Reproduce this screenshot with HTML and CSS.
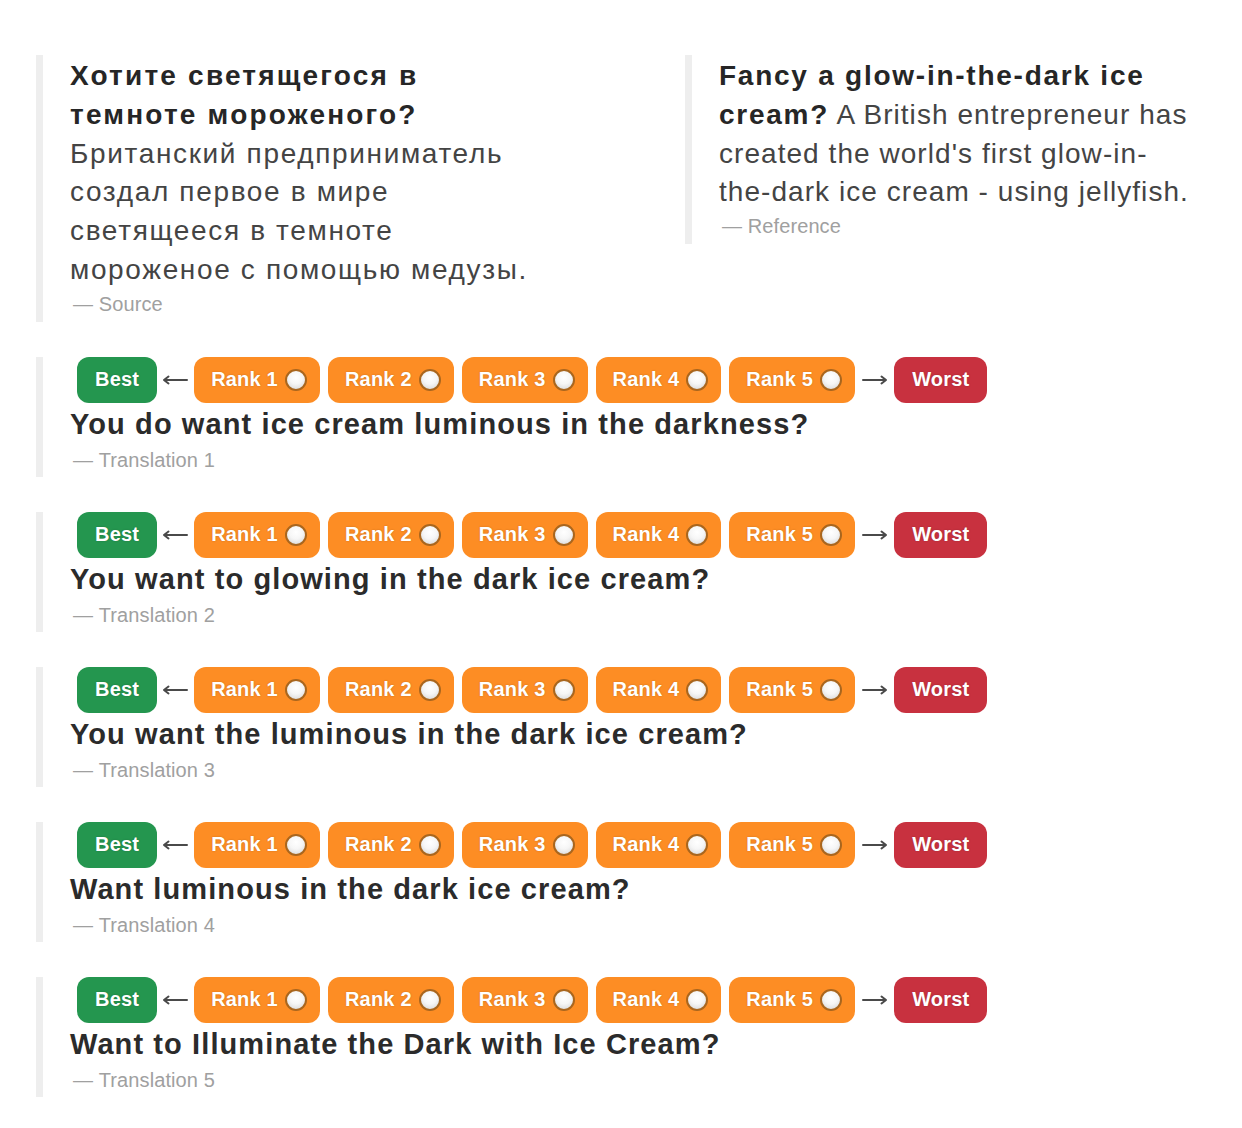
FILE: index.html
```html
<!DOCTYPE html>
<html lang="en">
<head>
<meta charset="utf-8">
<title>Translation ranking</title>
<link rel="stylesheet" href="styles.css">
</head>
<body>
<div class="page">
  <div class="pair">
    <blockquote class="quote quote-left" lang="ru">
      <p><strong>Хотите светящегося в темноте мороженого?</strong> Британский предприниматель создал первое в мире светящееся в темноте мороженое с помощью медузы.</p>
      <footer>Source</footer>
    </blockquote>
    <blockquote class="quote quote-right">
      <p><strong>Fancy a glow-in-the-dark ice cream?</strong> A British entrepreneur has created the world's first glow-in-the-dark ice cream - using jellyfish.</p>
      <footer>Reference</footer>
    </blockquote>
  </div>

  <blockquote class="quote rank-block">
    <div class="ranks">
      <span class="badge best">Best</span>
      <svg class="arrow" viewBox="0 0 26 10" width="26" height="10"><path d="M2 5H25M6.5 1.5L2 5L6.5 8.5"/></svg>
      <span class="badge rank">Rank 1<i class="dot"></i></span>
      <span class="badge rank">Rank 2<i class="dot"></i></span>
      <span class="badge rank">Rank 3<i class="dot"></i></span>
      <span class="badge rank">Rank 4<i class="dot"></i></span>
      <span class="badge rank">Rank 5<i class="dot"></i></span>
      <svg class="arrow arrow-right" viewBox="0 0 26 10" width="26" height="10"><path d="M1 5H24M19.5 1.5L24 5L19.5 8.5"/></svg>
      <span class="badge worst">Worst</span>
    </div>
    <p class="sentence">You do want ice cream luminous in the darkness?</p>
    <footer>Translation 1</footer>
  </blockquote>

  <blockquote class="quote rank-block">
    <div class="ranks">
      <span class="badge best">Best</span>
      <svg class="arrow" viewBox="0 0 26 10" width="26" height="10"><path d="M2 5H25M6.5 1.5L2 5L6.5 8.5"/></svg>
      <span class="badge rank">Rank 1<i class="dot"></i></span>
      <span class="badge rank">Rank 2<i class="dot"></i></span>
      <span class="badge rank">Rank 3<i class="dot"></i></span>
      <span class="badge rank">Rank 4<i class="dot"></i></span>
      <span class="badge rank">Rank 5<i class="dot"></i></span>
      <svg class="arrow arrow-right" viewBox="0 0 26 10" width="26" height="10"><path d="M1 5H24M19.5 1.5L24 5L19.5 8.5"/></svg>
      <span class="badge worst">Worst</span>
    </div>
    <p class="sentence">You want to glowing in the dark ice cream?</p>
    <footer>Translation 2</footer>
  </blockquote>

  <blockquote class="quote rank-block">
    <div class="ranks">
      <span class="badge best">Best</span>
      <svg class="arrow" viewBox="0 0 26 10" width="26" height="10"><path d="M2 5H25M6.5 1.5L2 5L6.5 8.5"/></svg>
      <span class="badge rank">Rank 1<i class="dot"></i></span>
      <span class="badge rank">Rank 2<i class="dot"></i></span>
      <span class="badge rank">Rank 3<i class="dot"></i></span>
      <span class="badge rank">Rank 4<i class="dot"></i></span>
      <span class="badge rank">Rank 5<i class="dot"></i></span>
      <svg class="arrow arrow-right" viewBox="0 0 26 10" width="26" height="10"><path d="M1 5H24M19.5 1.5L24 5L19.5 8.5"/></svg>
      <span class="badge worst">Worst</span>
    </div>
    <p class="sentence">You want the luminous in the dark ice cream?</p>
    <footer>Translation 3</footer>
  </blockquote>

  <blockquote class="quote rank-block">
    <div class="ranks">
      <span class="badge best">Best</span>
      <svg class="arrow" viewBox="0 0 26 10" width="26" height="10"><path d="M2 5H25M6.5 1.5L2 5L6.5 8.5"/></svg>
      <span class="badge rank">Rank 1<i class="dot"></i></span>
      <span class="badge rank">Rank 2<i class="dot"></i></span>
      <span class="badge rank">Rank 3<i class="dot"></i></span>
      <span class="badge rank">Rank 4<i class="dot"></i></span>
      <span class="badge rank">Rank 5<i class="dot"></i></span>
      <svg class="arrow arrow-right" viewBox="0 0 26 10" width="26" height="10"><path d="M1 5H24M19.5 1.5L24 5L19.5 8.5"/></svg>
      <span class="badge worst">Worst</span>
    </div>
    <p class="sentence">Want luminous in the dark ice cream?</p>
    <footer>Translation 4</footer>
  </blockquote>

  <blockquote class="quote rank-block">
    <div class="ranks">
      <span class="badge best">Best</span>
      <svg class="arrow" viewBox="0 0 26 10" width="26" height="10"><path d="M2 5H25M6.5 1.5L2 5L6.5 8.5"/></svg>
      <span class="badge rank">Rank 1<i class="dot"></i></span>
      <span class="badge rank">Rank 2<i class="dot"></i></span>
      <span class="badge rank">Rank 3<i class="dot"></i></span>
      <span class="badge rank">Rank 4<i class="dot"></i></span>
      <span class="badge rank">Rank 5<i class="dot"></i></span>
      <svg class="arrow arrow-right" viewBox="0 0 26 10" width="26" height="10"><path d="M1 5H24M19.5 1.5L24 5L19.5 8.5"/></svg>
      <span class="badge worst">Worst</span>
    </div>
    <p class="sentence">Want to Illuminate the Dark with Ice Cream?</p>
    <footer>Translation 5</footer>
  </blockquote>
</div>
</body>
</html>
```

FILE: styles.css
```css
html, body {
  margin: 0;
  padding: 0;
  background: #fff;
}

body {
  font-family: "Liberation Sans", Arial, Helvetica, sans-serif;
  color: #333;
}

.page {
  padding: 55px 0 0 36px;
}

.pair {
  display: flex;
  align-items: flex-start;
  margin-bottom: 35px;
}

.quote {
  margin: 0;
  border-left: 7px solid #eeeeee;
  padding: 2px 0 3px 27px;
}

.quote-left {
  width: 649px;
  flex: none;
  box-sizing: border-box;
}

.quote-left p {
  max-width: 472px;
  letter-spacing: 1.65px;
}

.quote-left p strong {
  letter-spacing: 2.2px;
}

.quote-right {
  flex: 1;
}

.quote-right p {
  max-width: 480px;
  letter-spacing: 1.05px;
}

.quote-right p strong {
  letter-spacing: 1.75px;
}

.quote p {
  margin: 0;
  font-size: 28px;
  line-height: 38.8px;
  color: #444;
}

.quote p strong {
  color: #262626;
  font-weight: bold;
}

.quote footer {
  font-size: 20px;
  line-height: 29px;
  color: #a0a0a0;
  padding-left: 3px;
  letter-spacing: 0.1px;
}

.quote footer::before {
  content: "\2014\00A0";
}

.rank-block {
  margin-bottom: 35px;
  padding: 0 0 3px 27px;
}

.ranks {
  display: flex;
  align-items: center;
  padding-left: 7px;
  height: 46px;
}

.badge {
  display: inline-flex;
  align-items: center;
  height: 46px;
  box-sizing: border-box;
  border-radius: 12px;
  color: #fff;
  font-weight: bold;
  font-size: 20px;
  letter-spacing: 0.2px;
  text-shadow: 0 0 2px rgba(0, 0, 0, 0.22);
}

.best {
  background: #24964f;
  padding: 0 18px;
}

.worst {
  background: #c8313f;
  padding: 0 18px;
}

.rank {
  background: #fd8d24;
  padding: 0 13px 0 17px;
}

.rank + .rank {
  margin-left: 8px;
}

.dot {
  width: 22px;
  height: 22px;
  box-sizing: border-box;
  border-radius: 50%;
  border: 2px solid #a9661e;
  background: radial-gradient(circle at 50% 35%, #ffffff 0%, #f6f6f6 45%, #d2d2d2 100%);
  margin-left: 7px;
}

.arrow {
  flex: none;
  margin: 0 6px 0 5px;
  fill: none;
  stroke: #4a4a4a;
  stroke-width: 2;
  stroke-linecap: round;
  stroke-linejoin: round;
}

.arrow-right {
  margin: 0 6px 0 7px;
}

.sentence.sentence {
  font-size: 29px;
  font-weight: bold;
  line-height: 43px;
  letter-spacing: 1.1px;
  color: #2b2b2b;
  margin: 0;
}

.rank-block footer {
  line-height: 28px;
}
```
